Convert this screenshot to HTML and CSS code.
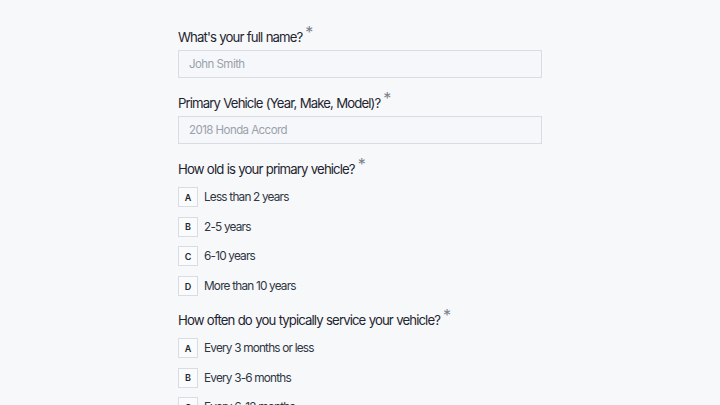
FILE: index.html
```html
<!DOCTYPE html>
<html lang="en">
<head>
    <meta charset="UTF-8">
    <meta name="viewport" content="width=device-width, initial-scale=1.0">
    <title>Vehicle Service Survey</title>
    <link rel="stylesheet" href="styles.css">
</head>
<body>
    <form class="survey">
        <div class="field">
            <label class="question" for="name">What's your full name?<span class="req">*</span></label>
            <input type="text" id="name" placeholder="John Smith">
        </div>

        <div class="field">
            <label class="question" for="vehicle">Primary Vehicle (Year, Make, Model)?<span class="req">*</span></label>
            <input type="text" id="vehicle" placeholder="2018 Honda Accord">
        </div>

        <div class="field">
            <div class="question">How old is your primary vehicle?<span class="req">*</span></div>
            <ul class="choices">
                <li><span class="key">A</span>Less than 2 years</li>
                <li><span class="key">B</span>2-5 years</li>
                <li><span class="key">C</span>6-10 years</li>
                <li><span class="key">D</span>More than 10 years</li>
            </ul>
        </div>

        <div class="field">
            <div class="question">How often do you typically service your vehicle?<span class="req">*</span></div>
            <ul class="choices">
                <li><span class="key">A</span>Every 3 months or less</li>
                <li><span class="key">B</span>Every 3-6 months</li>
                <li><span class="key">C</span>Every 6-12 months</li>
                <li><span class="key">D</span>Once a year or less</li>
            </ul>
        </div>
    </form>
</body>
</html>
```

FILE: styles.css
```css
body {
    margin: 0;
    background: #f7f8fa;
    font-family: Inter, "Noto Sans", sans-serif;
    color: #1f2530;
}

.survey {
    width: 364px;
    padding: 27px 0 0 178px;
}

.field { margin-bottom: 15px; }

.question {
    display: block;
    font-size: 13.2px;
    line-height: 20px;
    margin-bottom: 3px;
    letter-spacing: -0.9px;
    word-spacing: 0.5px;
}

.req {
    color: #7b828d;
    font-size: 16px;
    line-height: 0;
    position: relative;
    top: -4px;
    margin-left: 3px;
    letter-spacing: 0;
}

input {
    display: block;
    width: 100%;
    height: 28px;
    box-sizing: border-box;
    border: 1px solid #d9dde3;
    background: #f5f7fa;
    padding: 0 10px;
    font-family: inherit;
    font-size: 11.5px;
    letter-spacing: -0.55px;
    color: #2b313b;
    outline: none;
}

input::placeholder { color: #9aa1ab; }

.choices {
    list-style: none;
    margin: 0 0 -1px;
    padding: 5px 0 0;
    display: flex;
    flex-direction: column;
    gap: 9.7px;
}

.choices li {
    display: flex;
    align-items: center;
    font-size: 11.8px;
    letter-spacing: -0.8px;
    color: #2f3642;
    height: 20px;
}

.key {
    width: 18px;
    height: 18px;
    border: 1px solid #d9dde3;
    background: #fafbfc;
    display: flex;
    align-items: center;
    justify-content: center;
    font-size: 9px;
    font-weight: 600;
    letter-spacing: 0;
    color: #1f2530;
    margin-right: 6px;
}
```
